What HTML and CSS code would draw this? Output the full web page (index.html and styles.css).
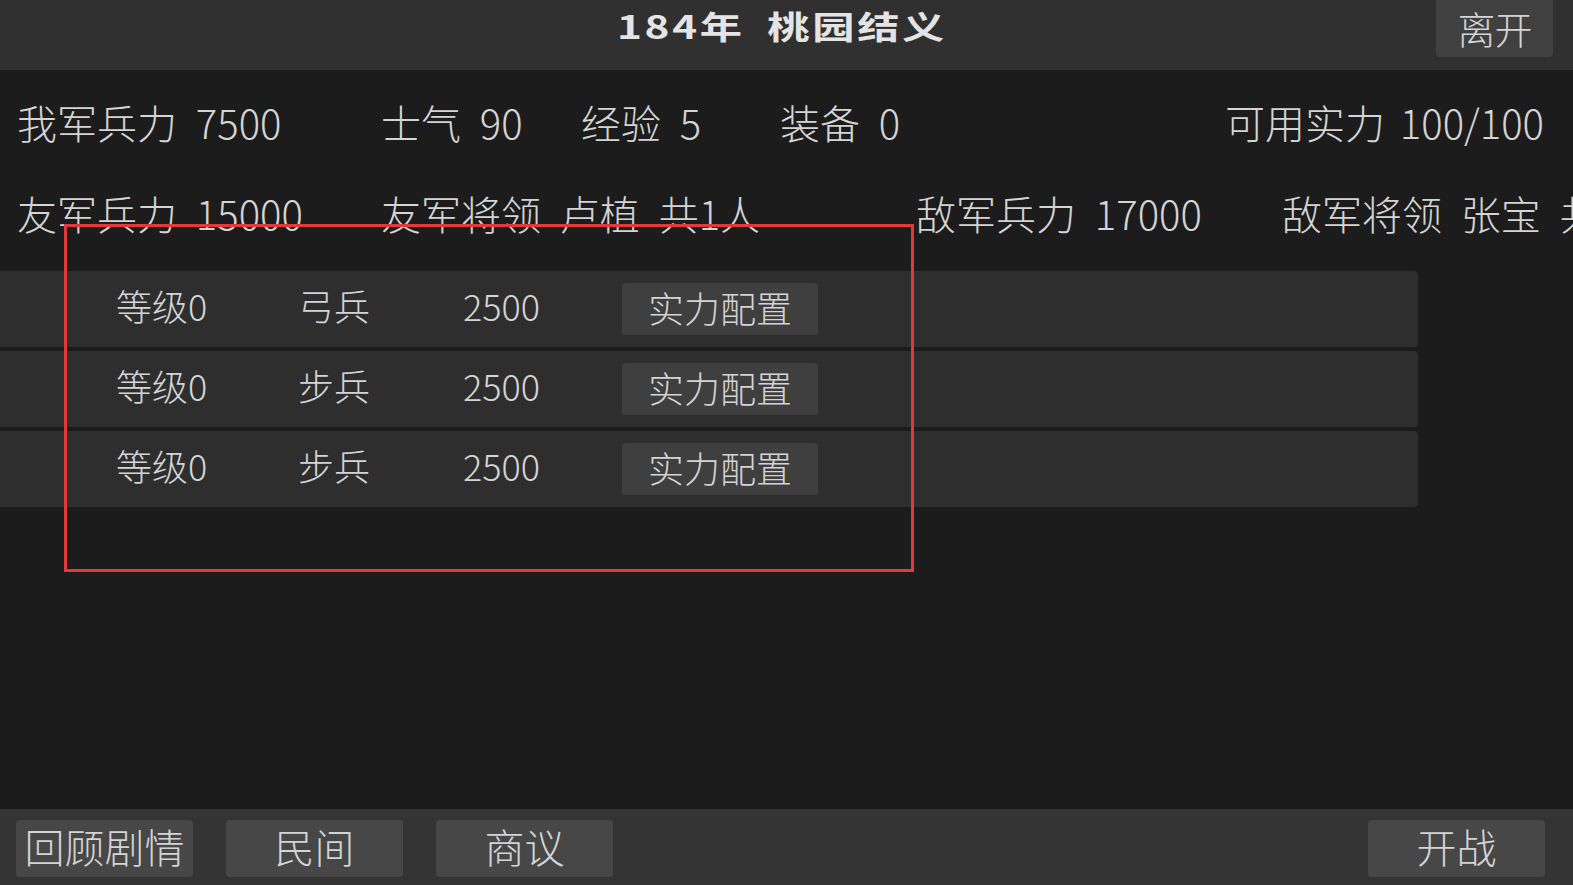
FILE: index.html
```html
<!DOCTYPE html>
<html lang="zh-CN">
<head>
  <meta charset="UTF-8" />
  <title>184年 桃园结义</title>
  <link rel="stylesheet" href="styles.css">
</head>
<body>
  <div class="screen">

    <header class="topbar">
      <h1 class="title"><span>184年 桃园结义</span></h1>
      <button class="leave">离开</button>
    </header>

    <section class="stats">
      <div class="stat-row">
        <span class="stat w364">我军兵力 7500</span>
        <span class="stat w200">士气 90</span>
        <span class="stat w199">经验 5</span>
        <span class="stat">装备 0</span>
        <span class="stat push">可用实力 100/100</span>
      </div>
      <div class="stat-row">
        <span class="stat w364">友军兵力 15000</span>
        <span class="stat w535">友军将领 卢植 共1人</span>
        <span class="stat w366">敌军兵力 17000</span>
        <span class="stat">敌军将领 张宝 共1人</span>
      </div>
    </section>

    <section class="units">
      <div class="unit">
        <span class="lv">等级0</span>
        <span class="kind">弓兵</span>
        <span class="num">2500</span>
        <button class="cfg">实力配置</button>
      </div>
      <div class="unit">
        <span class="lv">等级0</span>
        <span class="kind">步兵</span>
        <span class="num">2500</span>
        <button class="cfg">实力配置</button>
      </div>
      <div class="unit">
        <span class="lv">等级0</span>
        <span class="kind">步兵</span>
        <span class="num">2500</span>
        <button class="cfg">实力配置</button>
      </div>
    </section>

    <!-- red annotation frame drawn over the unit list -->
    <div class="mark"></div>

    <footer class="bottombar">
      <button class="btn">回顾剧情</button>
      <button class="btn">民间</button>
      <button class="btn">商议</button>
      <button class="btn go">开战</button>
    </footer>

  </div>
</body>
</html>
```

FILE: styles.css
```css
* {
  box-sizing: border-box;
}

body {
  margin: 0;
  background: #1c1c1c;
  font-family: "Noto Sans CJK SC", "Noto Sans", sans-serif;
  font-weight: 300;
  color: #d4d4d4;
  overflow: hidden;
}

button {
  font-family: inherit;
  font-weight: inherit;
  color: inherit;
  border: 0;
  padding: 0;
}

.screen {
  position: relative;
  width: 1573px;
  height: 885px;
  display: flex;
  flex-direction: column;
  overflow: hidden;
}

/* top bar */
.topbar {
  height: 70px;
  flex: none;
  background: #303030;
  display: grid;
  grid-template-columns: 1fr auto 1fr;
  align-items: start;
}

.title {
  grid-column: 2;
  margin: 0 10px 0 0;
  font-size: 32px;
  font-weight: 700;
  line-height: 50px;
  letter-spacing: 2px;
  color: #e4e4e4;
  white-space: nowrap;
}

.title span {
  display: inline-block;
  transform: scaleX(1.32);
  word-spacing: 8px;
}

.leave {
  grid-column: 3;
  justify-self: end;
  margin-right: 20px;
  width: 117px;
  height: 57px;
  padding-bottom: 2px;
  border-radius: 0 0 4px 4px;
  background: #404040;
  font-size: 38px;
  line-height: 50px;
  letter-spacing: -1px;
}

/* stats */
.stats {
  flex: none;
  padding-top: 6px;
}

.stat-row {
  height: 91px;
  display: flex;
  align-items: center;
  padding: 0 29px 0 17px;
  font-size: 40px;
  white-space: nowrap;
  word-spacing: 10px;
  overflow: hidden;
}

.stat {
  flex: none;
}

.w364 { width: 364px; }
.w200 { width: 200px; }
.w199 { width: 199px; }
.w535 { width: 535px; }
.w366 { width: 366px; }

.push {
  margin-left: auto;
  word-spacing: 6px;
}

/* unit list */
.units {
  flex: 1;
  margin-top: 13px;
  display: flex;
  flex-direction: column;
  gap: 4px;
}

.unit {
  width: 1418px;
  height: 76px;
  display: flex;
  align-items: center;
  padding-left: 116px;
  background: #2e2e2e;
  border-radius: 0 4px 4px 0;
  font-size: 36px;
  white-space: nowrap;
}

.unit span {
  line-height: 64px;
  padding-bottom: 9px;
}

.lv { width: 182px; }
.kind { width: 165px; }
.num { width: 159px; }

.cfg {
  width: 196px;
  height: 52px;
  padding-bottom: 4px;
  border-radius: 4px;
  background: #3f3f3f;
  font-size: 36px;
  line-height: 46px;
}

.mark {
  position: absolute;
  left: 64px;
  top: 224px;
  width: 850px;
  height: 348px;
  border: 3px solid #e3393c;
  pointer-events: none;
}

/* bottom bar */
.bottombar {
  height: 76px;
  flex: none;
  background: #343434;
  display: flex;
  align-items: flex-start;
  gap: 33px;
  padding: 11px 28px 0 16px;
}

.btn {
  width: 177px;
  height: 57px;
  padding-bottom: 6px;
  border-radius: 4px;
  background: #474747;
  font-size: 40px;
  line-height: 50px;
  white-space: nowrap;
}

.go {
  margin-left: auto;
}
```
